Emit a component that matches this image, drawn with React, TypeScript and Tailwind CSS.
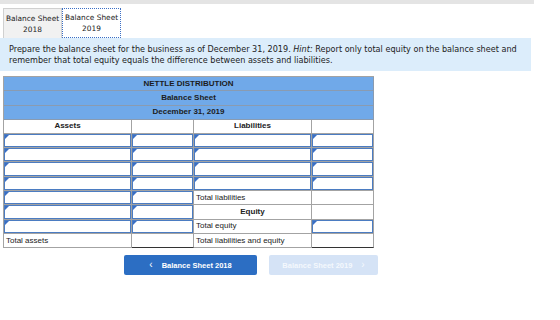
import React from 'react'

type Cell =
  | { kind: 'input' }
  | { kind: 'text'; text?: string; bold?: boolean; center?: boolean; underline?: boolean }

const COLS = 'grid grid-cols-[128px_62px_118px_62px]'

const inp: Cell = { kind: 'input' }
const blank: Cell = { kind: 'text' }

const rows: Cell[][] = [
  [inp, inp, inp, inp],
  [inp, inp, inp, inp],
  [inp, inp, inp, inp],
  [inp, inp, inp, inp],
  [inp, inp, { kind: 'text', text: 'Total liabilities' }, blank],
  [inp, inp, { kind: 'text', text: 'Equity', bold: true, center: true }, blank],
  [inp, inp, { kind: 'text', text: 'Total equity' }, inp],
  [
    { kind: 'text', text: 'Total assets' },
    { kind: 'text', underline: true },
    { kind: 'text', text: 'Total liabilities and equity' },
    { kind: 'text', underline: true },
  ],
]

function InputCell() {
  return (
    <div className="h-full border-r border-b border-[#a3a3a3]">
      <div className="relative h-full border-[1.5px] border-[#4b7cc2] bg-white">
        <span className="absolute left-0 top-0 w-0 h-0 border-t-[4px] border-r-[4px] border-t-[#3a6fc4] border-r-transparent" />
      </div>
    </div>
  )
}

function TextCell({ c }: { c: Extract<Cell, { kind: 'text' }> }) {
  return (
    <div
      className={
        'h-full flex items-center border-r border-b border-[#a3a3a3] px-[2px] text-[8px] text-[#222] whitespace-nowrap ' +
        (c.center ? 'justify-center ' : '') +
        (c.bold ? 'font-bold ' : '') +
        (c.underline ? 'border-b-[#333] border-b-[1.5px]' : '')
      }
    >
      {c.text}
    </div>
  )
}

export default function App() {
  return (
    <div className="w-[560px] h-[320px] bg-white overflow-hidden" style={{ fontFamily: 'Arial' }}>
      {/* top strip */}
      <div className="h-[4px] w-[534px] bg-[#e4e4e4]" />

      {/* tabs */}
      <div className="flex pl-[3px] mt-[4px] h-[30px] font-['DejaVu_Sans',sans-serif] text-[7.4px] leading-[11px] text-[#222]">
        <div className="w-[59px] flex flex-col items-center justify-center bg-[#f1f1f1] border border-[#d0d0d0] border-b-0">
          <span>Balance Sheet</span>
          <span>2018</span>
        </div>
        <div className="w-[59px] flex flex-col items-center justify-center bg-white border border-dotted border-[#3b6fc6]">
          <span>Balance Sheet</span>
          <span>2019</span>
        </div>
      </div>

      {/* instructions */}
      <div className="w-[531px] h-[33px] bg-[#dcedfb] px-[9px] pt-[6px] font-['DejaVu_Sans',sans-serif] text-[8.1px] leading-[11px] text-[#222] whitespace-nowrap">
        <div>
          Prepare the balance sheet for the business as of December 31, 2019. <i>Hint:</i> Report only total equity on the balance sheet and
        </div>
        <div>remember that total equity equals the difference between assets and liabilities.</div>
      </div>

      {/* balance sheet table */}
      <div className="ml-[3px] mt-[5px] w-[371px] border-l border-t border-[#a3a3a3] font-['Liberation_Sans',Arial,sans-serif]">
        {['NETTLE DISTRIBUTION', 'Balance Sheet', 'December 31, 2019'].map(t => (
          <div
            key={t}
            className="h-[14.3px] flex items-center justify-center bg-[#70a9e9] border-r border-b border-[#8a9bb0] text-[8px] font-bold text-[#1c1c1c]"
          >
            {t}
          </div>
        ))}
        <div className={COLS + ' h-[14px]'}>
          <div className="flex items-center justify-center border-r border-b border-[#a3a3a3] text-[8px] font-bold text-[#222]">Assets</div>
          <div className="border-r border-b border-[#a3a3a3]" />
          <div className="flex items-center justify-center border-r border-b border-[#a3a3a3] text-[8px] font-bold text-[#222]">Liabilities</div>
          <div className="border-r border-b border-[#a3a3a3]" />
        </div>
        {rows.map((r, i) => (
          <div key={i} className={COLS + ' h-[14.3px]'}>
            {r.map((c, j) =>
              c.kind === 'input' ? <InputCell key={j} /> : <TextCell key={j} c={c} />
            )}
          </div>
        ))}
      </div>

      {/* nav buttons */}
      <div className="flex ml-[124px] mt-[7px] gap-[12px] font-['Liberation_Sans',Arial,sans-serif] text-[7.5px] font-bold text-white">
        <div className="w-[133px] h-[20px] flex items-center justify-center gap-[9px] rounded-[2px] bg-[#2c6ec3]">
          <span className="text-[10px] font-normal leading-none">‹</span>
          <span>Balance Sheet 2018</span>
        </div>
        <div className="w-[109px] h-[20px] flex items-center justify-center gap-[9px] rounded-[2px] bg-[#d5e3f6] text-[#f4f8fd]">
          <span>Balance Sheet 2019</span>
          <span className="text-[10px] font-normal leading-none">›</span>
        </div>
      </div>
    </div>
  )
}
